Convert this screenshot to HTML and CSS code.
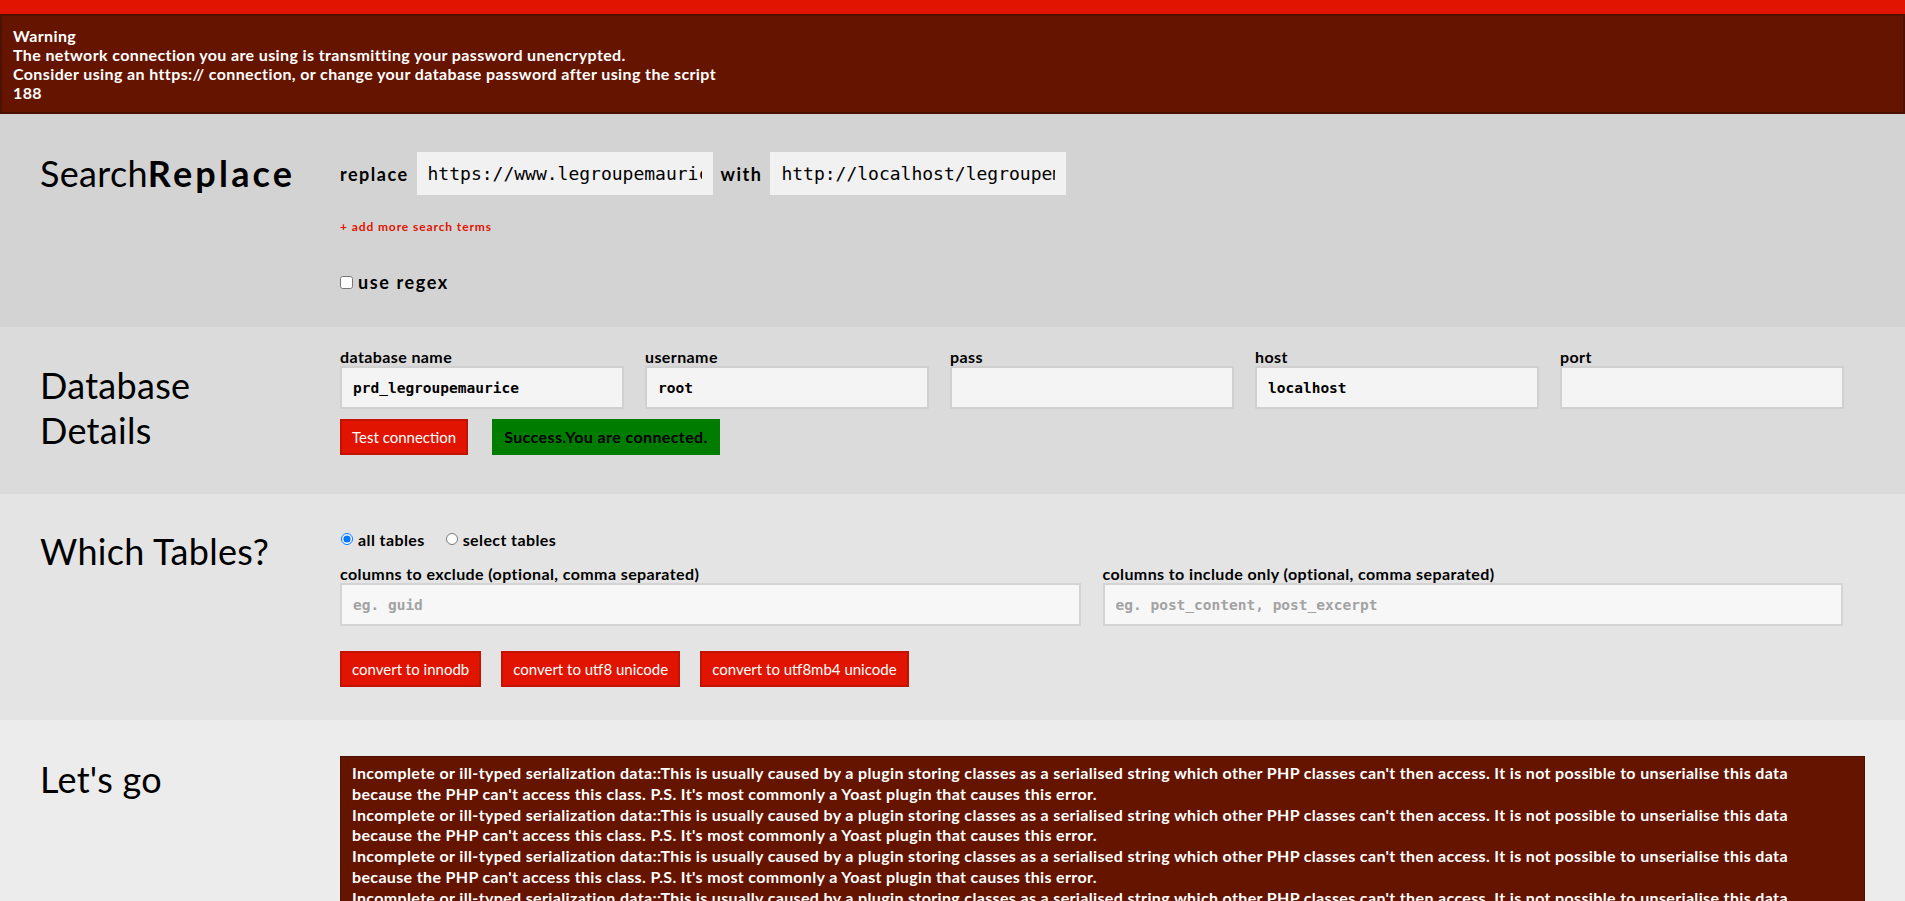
FILE: index.html
```html
<!DOCTYPE html>
<html lang="en">
<head>
<meta charset="utf-8">
<title>Search Replace DB</title>
<link rel="stylesheet" href="styles.css">
</head>
<body>
<div class="topbar"></div>
<div class="warning">
  <div>Warning</div>
  <div>The network connection you are using is transmitting your password unencrypted.</div>
  <div>Consider using an https:// connection, or change your database password after using the script</div>
  <div>188</div>
</div>

<section class="panel panel-search">
  <h1 class="title"><span class="title-light">Search</span><strong>Replace</strong></h1>
  <div class="content">
    <div class="terms-row">
      <label class="term-label">replace</label>
      <input class="term-input" type="text" value="https://www.legroupemaurice.com">
      <label class="term-label">with</label>
      <input class="term-input" type="text" value="http://localhost/legroupemaurice">
    </div>
    <div class="add-terms"><a href="#">+ add more search terms</a></div>
    <label class="regex"><input type="checkbox" class="regex-box"> use regex</label>
  </div>
</section>

<section class="panel panel-db">
  <h1 class="title">Database<br>Details</h1>
  <div class="content">
    <div class="db-grid">
      <div class="field"><label>database name</label><input type="text" value="prd_legroupemaurice"></div>
      <div class="field"><label>username</label><input type="text" value="root"></div>
      <div class="field"><label>pass</label><input type="text" value=""></div>
      <div class="field"><label>host</label><input type="text" value="localhost"></div>
      <div class="field"><label>port</label><input type="text" value=""></div>
    </div>
    <div class="btn-row">
      <button class="btn">Test connection</button>
      <div class="success">Success.You are connected.</div>
    </div>
  </div>
</section>

<section class="panel panel-tables">
  <h1 class="title">Which Tables?</h1>
  <div class="content">
    <div class="radio-row">
      <label class="radio"><input type="radio" name="tables" checked> all tables</label>
      <label class="radio"><input type="radio" name="tables"> select tables</label>
    </div>
    <div class="cols-grid">
      <div class="col-field"><label>columns to exclude (optional, comma separated)</label><input type="text" placeholder="eg. guid"></div>
      <div class="col-field"><label>columns to include only (optional, comma separated)</label><input type="text" placeholder="eg. post_content, post_excerpt"></div>
    </div>
    <div class="btn-row btn-row-wide">
      <button class="btn">convert to innodb</button>
      <button class="btn">convert to utf8 unicode</button>
      <button class="btn">convert to utf8mb4 unicode</button>
    </div>
  </div>
</section>

<section class="panel panel-go">
  <h1 class="title">Let's go</h1>
  <div class="content">
    <div class="errors">
      <div class="err">Incomplete or ill-typed serialization data::This is usually caused by a plugin storing classes as a serialised string which other PHP classes can't then access. It is not possible to unserialise this data<br>because the PHP can't access this class. P.S. It's most commonly a Yoast plugin that causes this error.</div>
      <div class="err">Incomplete or ill-typed serialization data::This is usually caused by a plugin storing classes as a serialised string which other PHP classes can't then access. It is not possible to unserialise this data<br>because the PHP can't access this class. P.S. It's most commonly a Yoast plugin that causes this error.</div>
      <div class="err">Incomplete or ill-typed serialization data::This is usually caused by a plugin storing classes as a serialised string which other PHP classes can't then access. It is not possible to unserialise this data<br>because the PHP can't access this class. P.S. It's most commonly a Yoast plugin that causes this error.</div>
      <div class="err">Incomplete or ill-typed serialization data::This is usually caused by a plugin storing classes as a serialised string which other PHP classes can't then access. It is not possible to unserialise this data<br>because the PHP can't access this class. P.S. It's most commonly a Yoast plugin that causes this error.</div>
    </div>
  </div>
</section>
</body>
</html>
```

FILE: styles.css
```css
* { box-sizing: border-box; }

body {
  margin: 0;
  font-family: Lato, "Open Sans", "Noto Sans", sans-serif;
  color: #000;
  background: #ececec;
}

.topbar {
  height: 14px;
  background: #e01400;
}

.warning {
  background: #651400;
  border: 2px solid #4c0f00;
  color: #fff;
  font-weight: 700;
  font-size: 16px;
  letter-spacing: 0.38px;
  line-height: 19px;
  padding: 10px 11px;
}

.panel {
  display: grid;
  grid-template-columns: 300px 1525px;
  padding: 22px 40px 0;
}

.panel-search { background: #d3d3d3; padding-bottom: 34px; }
.panel-db { background: #dbdbdb; padding-top: 21px; padding-bottom: 39px; }
.panel-tables { background: #e4e4e4; padding-top: 20px; padding-bottom: 33px; }
.panel-go { background: #ececec; padding-bottom: 30px; }

.title {
  margin: 15px 0 0;
  font-size: 36px;
  line-height: 45px;
  font-weight: 400;
  letter-spacing: 0.3px;
}

.title-light { font-weight: 400; }
.title strong { font-weight: 700; letter-spacing: 3.2px; }

/* Search / replace */
.terms-row {
  display: flex;
  align-items: center;
  margin-top: 16px;
  height: 43px;
}

.term-label {
  font-size: 18px;
  letter-spacing: 1.5px;
  font-weight: 700;
}

.term-input {
  width: 296px;
  height: 43px;
  margin: 0 8px;
  border: none;
  background: #f1f1f1;
  padding: 0 11px;
  font-family: "DejaVu Sans Mono", "Liberation Mono", monospace;
  font-size: 18px;
  color: #000;
}

.add-terms {
  margin-top: 25px;
  font-size: 12px;
  letter-spacing: 0.9px;
  line-height: 13px;
  font-weight: 700;
}

.add-terms a {
  color: #e01400;
  text-decoration: none;
}

.regex {
  display: flex;
  align-items: center;
  margin-top: 38px;
  font-size: 18px;
  letter-spacing: 1.6px;
  line-height: 22px;
  font-weight: 700;
  gap: 5px;
}

.regex-box {
  margin: 0;
  width: 13px;
  height: 13px;
}

/* Database */
.db-grid {
  display: grid;
  grid-template-columns: repeat(5, 305px);
}

.field label,
.col-field label {
  display: block;
  font-size: 16px;
  letter-spacing: 0.4px;
  line-height: 18px;
  font-weight: 700;
}

.field input {
  display: block;
  width: 284px;
  height: 43px;
  border: 2px solid #d0d0d0;
  background: #f4f4f4;
  padding: 0 11px;
  font-family: "DejaVu Sans Mono", "Liberation Mono", monospace;
  font-weight: 700;
  font-size: 14.5px;
  color: #000;
}

.btn-row {
  display: flex;
  align-items: center;
  margin-top: 10px;
  gap: 24px;
}

.btn-row-wide {
  margin-top: 25px;
  gap: 20px;
}

.btn {
  height: 36px;
  padding: 0 10px;
  background: #e01400;
  border: 2px solid #c41200;
  color: #fff;
  font-family: Lato, "Open Sans", sans-serif;
  font-size: 15px;
  cursor: pointer;
}

.success {
  height: 36px;
  line-height: 36px;
  padding: 0 12px;
  background: #007d00;
  color: #000;
  font-weight: 700;
  font-size: 16px;
  letter-spacing: 0.4px;
}

/* Tables */
.radio-row {
  display: flex;
  align-items: center;
  margin-top: 16px;
  height: 18px;
  gap: 20px;
}

.radio {
  display: flex;
  align-items: center;
  gap: 5px;
  font-size: 16px;
  letter-spacing: 0.4px;
  font-weight: 700;
}

.radio input {
  margin: 0 0 0 1px;
  width: 12px;
  height: 12px;
}

.cols-grid {
  display: grid;
  grid-template-columns: 1fr 1fr;
  margin-top: 17px;
}

.col-field input {
  display: block;
  width: calc(100% - 22px);
  height: 43px;
  border: 2px solid #d4d4d4;
  background: #f7f7f7;
  padding: 0 11px;
  font-family: "DejaVu Sans Mono", "Liberation Mono", monospace;
  font-weight: 700;
  font-size: 14.5px;
}

.col-field input::placeholder {
  color: #a3a3a3;
}

/* Let's go */
.errors {
  margin-top: 14px;
  background: #651400;
  border: 1px solid #4c0f00;
  color: #fff;
  font-weight: 700;
  font-size: 16px;
  letter-spacing: 0.35px;
  line-height: 20.8px;
  padding: 6px 11px;
}
```
